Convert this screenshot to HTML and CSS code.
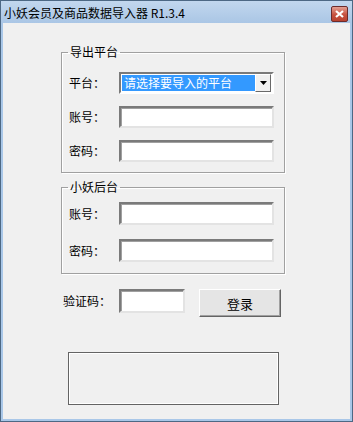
FILE: index.html
```html
<!DOCTYPE html>
<html lang="zh-CN">
<head>
    <meta charset="UTF-8">
    <meta name="viewport" content="width=device-width, initial-scale=1.0">
    <title>小妖会员及商品数据导入器 R1.3.4</title>
    <link rel="stylesheet" href="styles.css">
</head>
<body>
    <div class="window">
        <div class="titlebar">
            <span class="title">小妖会员及商品数据导入器 R1.3.4</span>
            <div class="close">
                <svg width="9" height="8" viewBox="0 0 9 8">
                    <path d="M1 1 L8 7 M8 1 L1 7" stroke="#fff" stroke-width="2.2"/>
                </svg>
            </div>
        </div>
        <div class="content">
            <fieldset class="group first">
                <legend>导出平台</legend>
                <div class="row">
                    <label>平台：</label>
                    <div class="combo">
                        <span class="combo-text">请选择要导入的平台</span>
                        <span class="combo-btn">
                            <svg width="7" height="4" viewBox="0 0 7 4"><path d="M0 0 H7 L3.5 4 Z" fill="#000"/></svg>
                        </span>
                    </div>
                </div>
                <div class="row">
                    <label>账号：</label>
                    <input class="textbox" type="text">
                </div>
                <div class="row">
                    <label>密码：</label>
                    <input class="textbox" type="password">
                </div>
            </fieldset>

            <fieldset class="group second">
                <legend>小妖后台</legend>
                <div class="row">
                    <label>账号：</label>
                    <input class="textbox tall" type="text">
                </div>
                <div class="row">
                    <label>密码：</label>
                    <input class="textbox tall" type="password">
                </div>
            </fieldset>

            <div class="captcha">
                <label>验证码：</label>
                <input class="textbox code" type="text">
                <button class="login">登录</button>
            </div>

            <div class="preview"></div>
        </div>
    </div>
</body>
</html>
```

FILE: styles.css
```css
body {
    margin: 0;
    font-family: "Noto Sans CJK SC", "Liberation Sans", sans-serif;
    font-size: 12px;
    color: #000;
}
.window {
    width: 353px;
    height: 422px;
    box-sizing: border-box;
    border: 1px solid #4d6884;
    background: #a9c7e8;
    padding: 0 2px 2px;
    display: flex;
    flex-direction: column;
}
.titlebar {
    height: 22px;
    margin: 0 -2px;
    padding: 0 4px 0 3px;
    display: flex;
    align-items: center;
    justify-content: space-between;
    background: linear-gradient(#c2d7ee, #aac6e5);
}
.title {
    font-size: 12px;
    line-height: 14px;
    padding-top: 1px;
}
.close {
    width: 15px;
    height: 14px;
    margin-top: 3px;
    border: 1px solid #6b2b2b;
    border-radius: 2px;
    background: linear-gradient(#e3a093, #c7513f 55%, #b8412f);
    display: flex;
    align-items: center;
    justify-content: center;
}
.content {
    flex: 1;
    background: #f0f0f0;
    padding: 22px 0 0;
}
.group {
    margin: 0 0 0 58px;
    width: 224px;
    box-sizing: border-box;
    padding: 0 0 10px 7px;
    border: 1px solid #a0a0a0;
    box-shadow: 1px 1px 0 #fff, inset 1px 1px 0 #fff;
}
.group legend {
    margin-left: -1px;
    padding: 0 2px;
    line-height: 14px;
}
.group.first {
    padding-top: 13px;
}
.group.second {
    margin-top: 7px;
    padding-top: 8px;
    padding-bottom: 11px;
}
.row {
    display: flex;
    align-items: center;
    margin-bottom: 12px;
}
.row:last-child {
    margin-bottom: 0;
}
.second .row {
    margin-bottom: 14px;
}
.second .row:last-child {
    margin-bottom: 0;
}
.row label {
    width: 50px;
    line-height: 14px;
}
.textbox {
    width: 155px;
    height: 22px;
    box-sizing: border-box;
    margin: 0;
    padding: 0 3px;
    background: #fff;
    border: 2px solid;
    border-color: #7a7a7a #e3e3e3 #e3e3e3 #7a7a7a;
    box-shadow: inset 1px 1px 0 #a0a0a0;
    font: inherit;
    outline: none;
}
.textbox.tall {
    height: 23px;
}
.combo {
    width: 155px;
    height: 22px;
    box-sizing: border-box;
    border: 2px solid;
    border-color: #7a7a7a #fff #fff #7a7a7a;
    background: #fff;
    display: flex;
    align-items: center;
    padding: 1px;
}
.combo-text {
    flex: 1;
    height: 16px;
    line-height: 16px;
    background: #3399ff;
    color: #fff;
    padding-left: 2px;
    font-size: 12px;
}
.combo-btn {
    width: 16px;
    height: 18px;
    box-sizing: border-box;
    border: 1px solid;
    border-color: #fff #696969 #696969 #fff;
    background: #f0f0f0;
    display: flex;
    align-items: center;
    justify-content: center;
}
.captcha {
    display: flex;
    align-items: flex-start;
    margin: 15px 0 0 60px;
}
.captcha label {
    width: 56px;
    line-height: 24px;
    font-size: 12px;
}
.textbox.code {
    width: 66px;
    height: 24px;
}
.login {
    margin-left: 14px;
    width: 82px;
    height: 28px;
    background: #e5e5e5;
    border: 1px solid;
    border-color: #fff #646464 #646464 #fff;
    box-shadow: inset -1px -1px 0 #a0a0a0;
    font: inherit;
    font-size: 13px;
    padding: 0;
}
.preview {
    margin: 35px 0 0 65px;
    width: 211px;
    height: 53px;
    box-sizing: border-box;
    border: 1px solid #646464;
    box-shadow: inset 1px 1px 0 #fff, inset -1px -1px 0 #fff;
}
```
